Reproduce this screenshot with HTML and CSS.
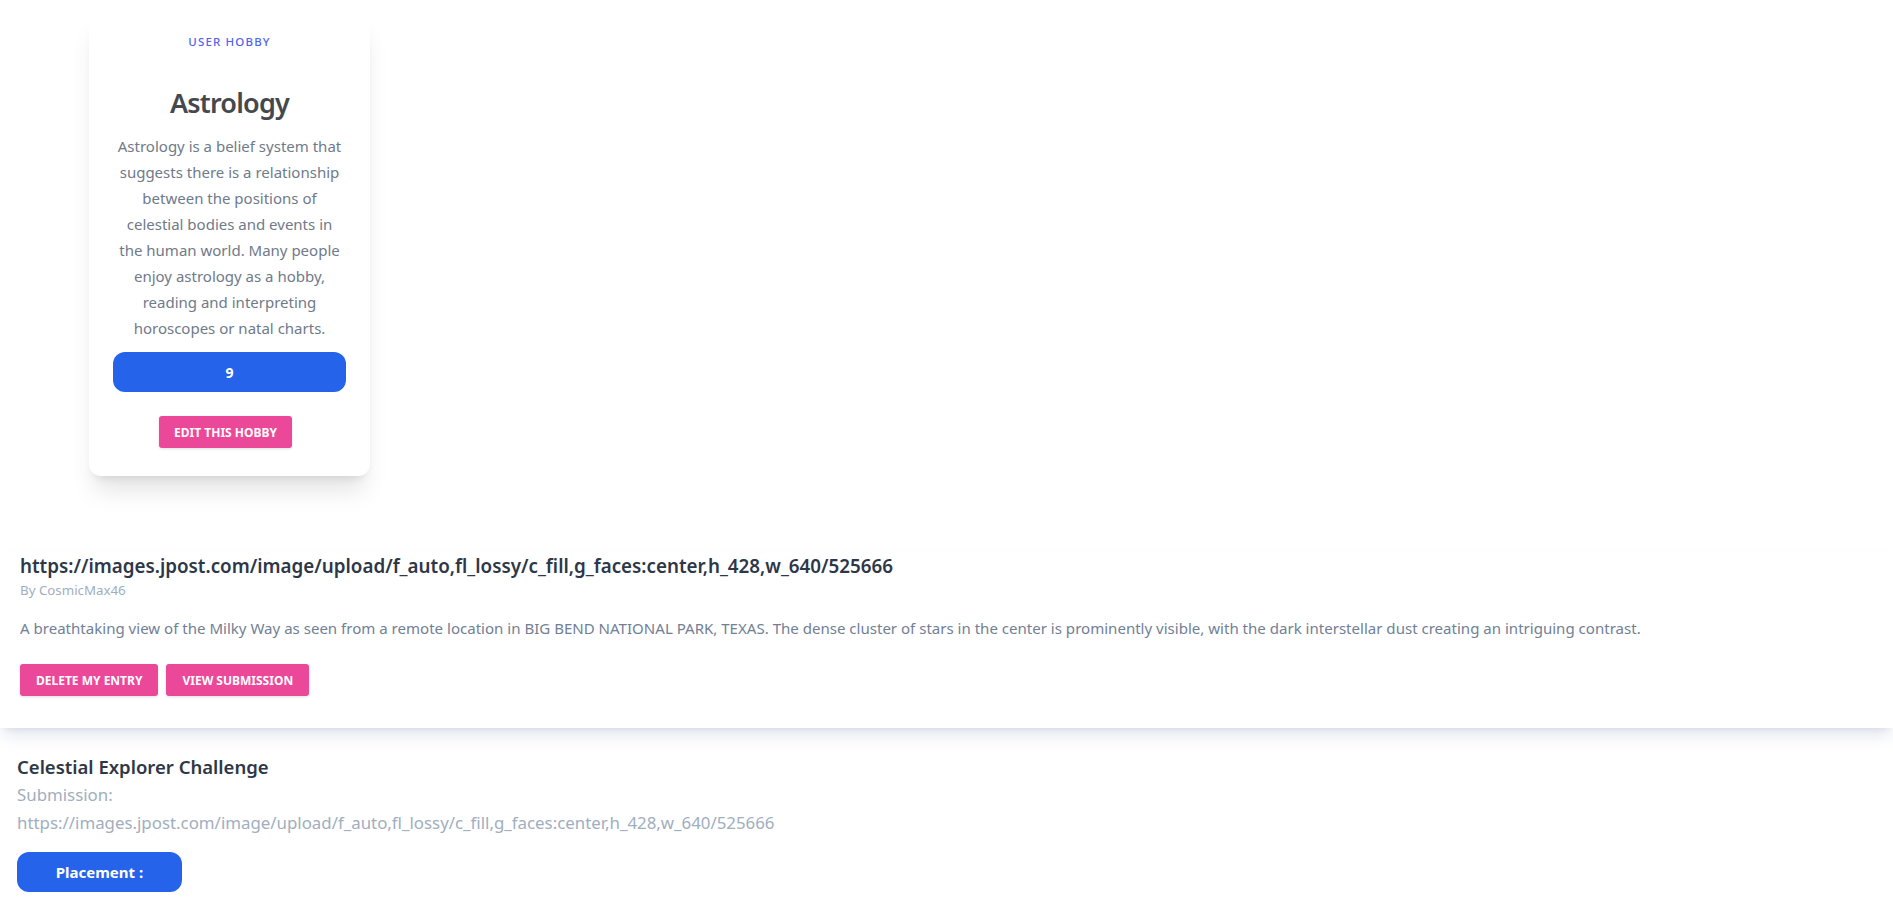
FILE: index.html
```html
<!DOCTYPE html>
<html lang="en">
<head>
<meta charset="utf-8">
<title>User Hobby</title>
<link rel="stylesheet" href="styles.css">
</head>
<body>
<section class="hobbies">
  <article class="card">
    <div class="eyebrow">User Hobby</div>
    <h2 class="card-title">Astrology</h2>
    <p class="card-text">Astrology is a belief system that suggests there is a relationship between the positions of celestial bodies and events in the human world. Many people enjoy astrology as a hobby, reading and interpreting horoscopes or natal charts.</p>
    <div class="count">9</div>
    <button class="btn btn-pink">Edit this hobby</button>
  </article>
</section>

<section class="entry">
  <h3 class="entry-title">https://images.jpost.com/image/upload/f_auto,fl_lossy/c_fill,g_faces:center,h_428,w_640/525666</h3>
  <div class="entry-author">By CosmicMax46</div>
  <p class="entry-desc">A breathtaking view of the Milky Way as seen from a remote location in BIG BEND NATIONAL PARK, TEXAS. The dense cluster of stars in the center is prominently visible, with the dark interstellar dust creating an intriguing contrast.</p>
  <div class="entry-actions">
    <button class="btn btn-pink">Delete my entry</button>
    <button class="btn btn-pink">View submission</button>
  </div>
</section>

<section class="challenge">
  <h4 class="challenge-title">Celestial Explorer Challenge</h4>
  <div class="challenge-meta">Submission:</div>
  <div class="challenge-meta">https://images.jpost.com/image/upload/f_auto,fl_lossy/c_fill,g_faces:center,h_428,w_640/525666</div>
  <button class="placement">Placement :</button>
</section>
</body>
</html>
```

FILE: styles.css
```css
* { box-sizing: border-box; }

body {
  margin: 0;
  background: #ffffff;
  font-family: "Noto Sans", "Open Sans", sans-serif;
  color: #2d3748;
}

.hobbies {
  display: grid;
  grid-template-columns: 281px;
  padding: 12px 0 0 89px;
}

.card {
  background: #ffffff;
  border-radius: 12px;
  box-shadow: 0 20px 25px -5px rgba(0,0,0,0.1), 0 8px 10px -6px rgba(0,0,0,0.1);
  padding: 22px 24px 28px;
  display: flex;
  flex-direction: column;
  align-items: center;
  text-align: center;
}

.eyebrow {
  font-size: 11.5px;
  line-height: 16px;
  letter-spacing: 0.1em;
  text-transform: uppercase;
  color: #4f63ee;
  font-weight: 500;
}

.card-title {
  margin: 35px 0 0;
  font-size: 27px;
  line-height: 36px;
  font-weight: 600;
  color: #45484d;
  letter-spacing: -0.8px;
}

.card-text {
  margin: 12px 0 0;
  max-width: 228px;
  font-size: 15px;
  line-height: 26px;
  color: #6f7a8a;
}

.count {
  margin-top: 11px;
  width: 100%;
  height: 40px;
  border-radius: 12px;
  background: #2563eb;
  color: #ffffff;
  font-weight: 700;
  font-size: 14px;
  display: flex;
  align-items: center;
  justify-content: center;
}

.btn {
  border: 0;
  border-radius: 3px;
  height: 32px;
  padding: 0 16px;
  font-family: inherit;
  font-size: 12px;
  font-weight: 700;
  text-transform: uppercase;
  color: #ffffff;
  cursor: pointer;
  box-shadow: 0 1px 3px rgba(0,0,0,0.12);
}

.btn-pink { background: #ec4899; }

.card .btn { margin: 24px 8px 0 0; padding: 0 15px; }

.entry {
  margin-top: 76px;
  padding: 0 20px 32px;
  background: #ffffff;
  box-shadow: 0 10px 15px -3px rgba(100,116,160,0.18), 0 4px 6px -4px rgba(100,116,160,0.18);
}

.entry-title {
  margin: 0;
  font-size: 18.8px;
  line-height: 28px;
  font-weight: 600;
  color: #2d3748;
}

.entry-author {
  font-size: 13.3px;
  line-height: 20px;
  color: #a0aec0;
}

.entry-desc {
  margin: 16px 0 0;
  font-size: 15.05px;
  line-height: 24px;
  color: #718096;
}

.entry-actions {
  margin-top: 24px;
  display: flex;
  gap: 8px;
}

.challenge {
  padding: 25px 16px 16px 17px;
}

.challenge-title {
  margin: 0;
  font-size: 18.5px;
  line-height: 28px;
  font-weight: 600;
  color: #2d3748;
}

.challenge-meta {
  font-size: 16.85px;
  line-height: 28px;
  color: #a0aec0;
}

.placement {
  margin-top: 15px;
  width: 165px;
  height: 40px;
  border: 0;
  border-radius: 12px;
  background: #2563eb;
  color: #ffffff;
  font-family: inherit;
  font-size: 15px;
  font-weight: 700;
  cursor: pointer;
}
```
